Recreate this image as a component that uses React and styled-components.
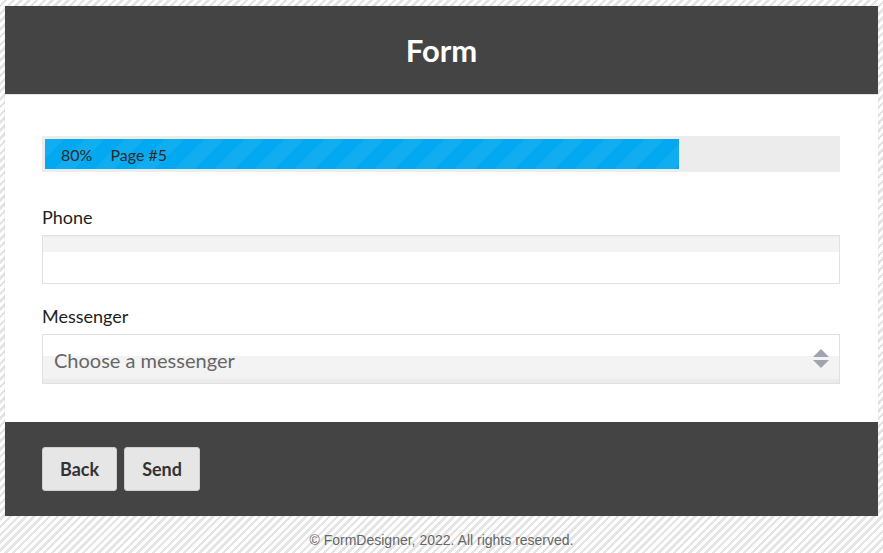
import React from "react";
import styled, { createGlobalStyle } from "styled-components";

const GlobalStyle = createGlobalStyle`
  html, body {
    margin: 0;
    padding: 0;
  }
  body {
    font-family: Lato, "Noto Sans", sans-serif;
    background: repeating-linear-gradient(
      135deg,
      #ffffff 0px,
      #ffffff 3px,
      #e4e4e4 3px,
      #e4e4e4 5.5px
    );
    min-height: 553px;
  }
`;

const Page = styled.div`
  padding: 6px 5px 0;
`;

const Card = styled.div`
  background: #fff;
  box-shadow: 0 0 2px rgba(0, 0, 0, 0.08);
`;

const Header = styled.header`
  height: 89px;
  background: #444;
  border-bottom: 1px solid #e2e2e2;
  box-sizing: border-box;
  display: flex;
  align-items: center;
  justify-content: center;
`;

const Title = styled.h1`
  margin: 0;
  color: #fff;
  font-size: 31px;
  font-weight: 700;
`;

const Body = styled.div`
  padding: 41px 38px 38px 37px;
  display: flex;
  flex-direction: column;
`;

const Progress = styled.div`
  height: 36px;
  box-sizing: border-box;
  padding: 3px;
  background: #ececec;
  margin-bottom: 33px;
`;

const ProgressBar = styled.div`
  height: 100%;
  background-color: #03a9f0;
  background-image: linear-gradient(
    135deg,
    rgba(255, 255, 255, 0.05) 25%,
    transparent 25%,
    transparent 50%,
    rgba(255, 255, 255, 0.05) 50%,
    rgba(255, 255, 255, 0.05) 75%,
    transparent 75%,
    transparent
  );
  background-size: 40px 40px;
  display: flex;
  align-items: center;
  gap: 18px;
  padding-left: 16px;
  box-sizing: border-box;
  color: #2a2a2a;
  font-size: 16px;
`;

const Label = styled.label`
  display: block;
  font-size: 18px;
  line-height: 24px;
  color: #1e1e1e;
  margin-bottom: 6px;
`;

const Input = styled.input`
  display: block;
  width: 100%;
  height: 49px;
  box-sizing: border-box;
  border: 1px solid #e0e0e0;
  background: linear-gradient(
    to bottom,
    #ececec 0px,
    #f3f3f3 2px,
    #f3f3f3 16px,
    #fff 16px
  );
  margin: 0 0 20px;
  outline: none;
`;

const SelectWrap = styled.div`
  position: relative;
`;

const Select = styled.div`
  height: 50px;
  box-sizing: border-box;
  border: 1px solid #e0e0e0;
  background: linear-gradient(
    to bottom,
    #fff 0px,
    #fff 21px,
    #f3f3f3 21px,
    #f3f3f3 44px,
    #ebebeb 44px
  );
  display: flex;
  align-items: center;
  padding: 2px 11px 0;
  font-size: 20px;
  color: #666;
`;

const Arrows = styled.svg`
  position: absolute;
  right: 11px;
  top: 15px;
`;

const Footer = styled.footer`
  background: #444;
  padding: 25px 37px;
  display: flex;
  gap: 7px;
`;

const Button = styled.button`
  height: 44px;
  padding: 0 17px;
  background: #e6e6e6;
  border: 1px solid #cfcfcf;
  border-radius: 3px;
  font-family: Lato, "Noto Sans", sans-serif;
  font-size: 18px;
  font-weight: 700;
  color: #333;
  cursor: pointer;
`;

const Copyright = styled.p`
  margin: 0;
  padding-top: 16px;
  text-align: center;
  font-family: "Liberation Sans", Arial, sans-serif;
  font-size: 14px;
  color: #666;
`;

export default function App() {
  const progress = 80;

  return (
    <Page>
      <GlobalStyle />
      <Card>
        <Header>
          <Title>Form</Title>
        </Header>
        <Body>
          <Progress>
            <ProgressBar style={{ width: `${progress}%` }}>
              <span>{progress}%</span>
              <span>Page #5</span>
            </ProgressBar>
          </Progress>

          <Label>Phone</Label>
          <Input type="text" />

          <Label>Messenger</Label>
          <SelectWrap>
            <Select>Choose a messenger</Select>
            <Arrows width="16" height="20" viewBox="0 0 16 20">
              <polygon points="8,0 16,8 0,8" fill="#a0a4ae" />
              <polygon points="0,11 16,11 8,19" fill="#a0a4ae" />
            </Arrows>
          </SelectWrap>
        </Body>
        <Footer>
          <Button>Back</Button>
          <Button>Send</Button>
        </Footer>
      </Card>
      <Copyright>© FormDesigner, 2022. All rights reserved.</Copyright>
    </Page>
  );
}
